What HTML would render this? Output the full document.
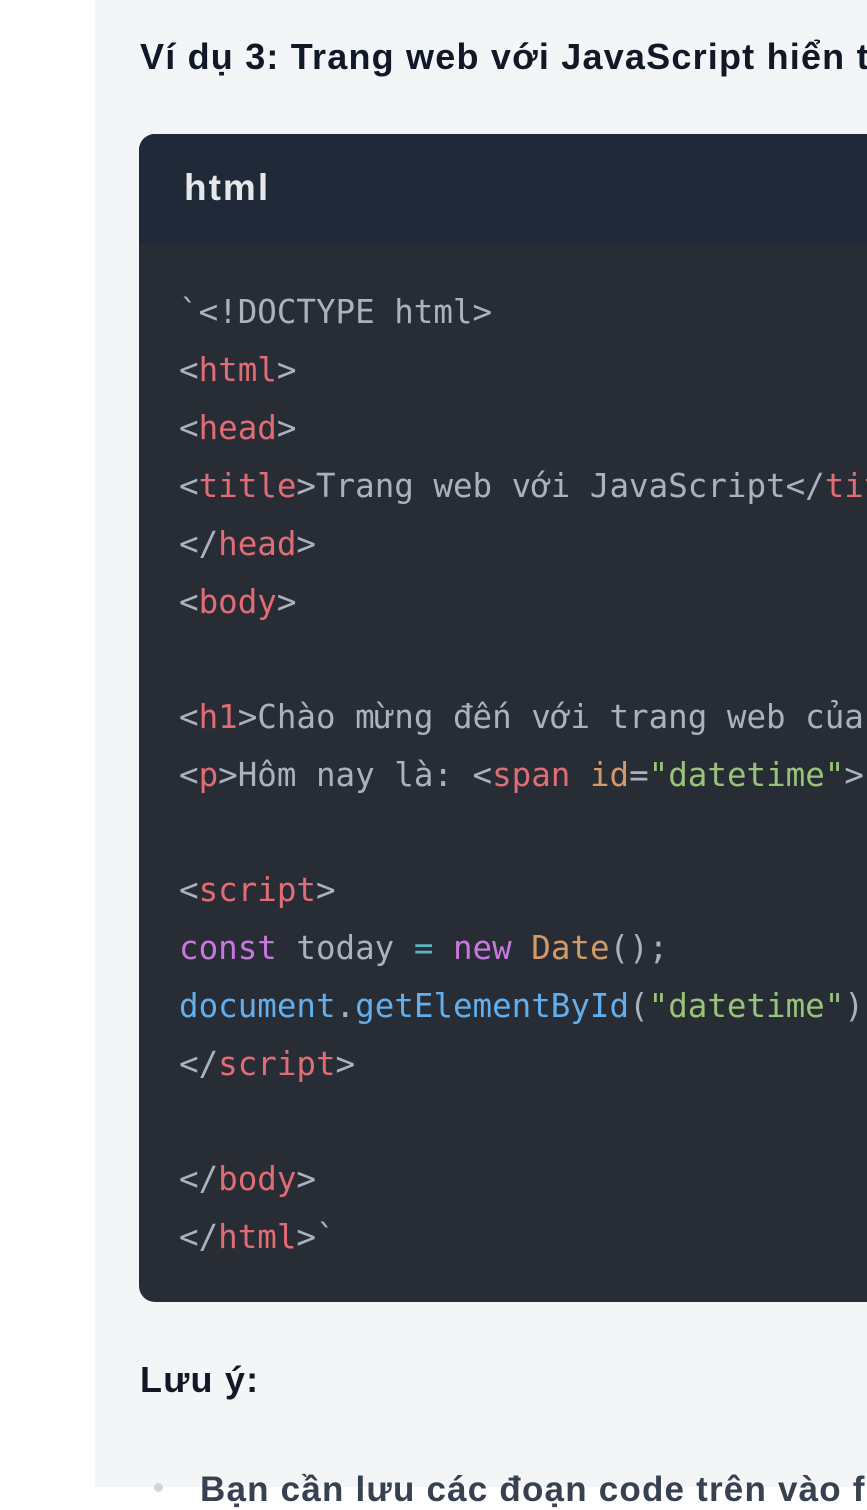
<!DOCTYPE html>
<html><head><meta charset="utf-8"><style>
html,body{margin:0;padding:0;}
body{width:867px;height:1487px;overflow:hidden;background:#fff;position:relative;font-family:"Liberation Sans",sans-serif;}
.main{position:absolute;left:95px;top:0;width:772px;height:1487px;background:#f4f5f7;}
.h{position:absolute;left:140px;font-weight:bold;font-size:36px;letter-spacing:1.2px;color:#111827;white-space:nowrap;line-height:40px;}
.code{position:absolute;left:139px;top:134px;width:760px;height:1168px;border-radius:16px;background:#282c34;overflow:hidden;}
.hdr{height:110px;background:#1f2937;}
.hdr span{position:absolute;left:184px;left:45px;top:34px;font-size:37px;letter-spacing:2px;font-weight:bold;color:#e5e7eb;line-height:40px;}
.ln{position:absolute;left:40px;font-family:"DejaVu Sans Mono","Liberation Mono",monospace;font-size:32.5px;color:#abb2bf;white-space:pre;line-height:40px;}
.t{color:#e06c75}.a{color:#d19a66}.s{color:#98c379}.k{color:#c678dd}.f{color:#61afef}.o{color:#56b6c2}
.li{position:absolute;left:200px;top:1470px;font-size:35px;letter-spacing:1.2px;font-weight:bold;color:#374151;white-space:nowrap;}
.dot{position:absolute;left:154px;top:1483px;width:9px;height:9px;border-radius:50%;background:#d1d5db;}
</style></head><body>
<div class="main"></div>
<div class="h" style="top:37px">Ví dụ 3: Trang web với JavaScript hiển thị ngày giờ</div>
<div class="code">
<div class="hdr"><span>html</span></div>
<div class="ln" style="top:158px">`&lt;!DOCTYPE html&gt;</div>
<div class="ln" style="top:216px">&lt;<span class="t">html</span>&gt;</div>
<div class="ln" style="top:274px">&lt;<span class="t">head</span>&gt;</div>
<div class="ln" style="top:332px">&lt;<span class="t">title</span>&gt;Trang web với JavaScript&lt;/<span class="t">title</span>&gt;</div>
<div class="ln" style="top:390px">&lt;/<span class="t">head</span>&gt;</div>
<div class="ln" style="top:448px">&lt;<span class="t">body</span>&gt;</div>
<div class="ln" style="top:563px">&lt;<span class="t">h1</span>&gt;Chào mừng đến với trang web của tôi</div>
<div class="ln" style="top:621px">&lt;<span class="t">p</span>&gt;Hôm nay là: &lt;<span class="t">span</span> <span class="a">id</span>=<span class="s">"datetime"</span>&gt;</div>
<div class="ln" style="top:736px">&lt;<span class="t">script</span>&gt;</div>
<div class="ln" style="top:794px"><span class="k">const</span> today <span class="o">=</span> <span class="k">new</span> <span class="a">Date</span>();</div>
<div class="ln" style="top:852px"><span class="f">document</span>.<span class="f">getElementById</span>(<span class="s">"datetime"</span>)</div>
<div class="ln" style="top:910px">&lt;/<span class="t">script</span>&gt;</div>
<div class="ln" style="top:1025px">&lt;/<span class="t">body</span>&gt;</div>
<div class="ln" style="top:1083px">&lt;/<span class="t">html</span>&gt;`</div>
</div>
<div class="h" style="top:1360px">Lưu ý:</div>
<div class="dot"></div>
<div class="li">Bạn cần lưu các đoạn code trên vào file</div>
</body></html>
